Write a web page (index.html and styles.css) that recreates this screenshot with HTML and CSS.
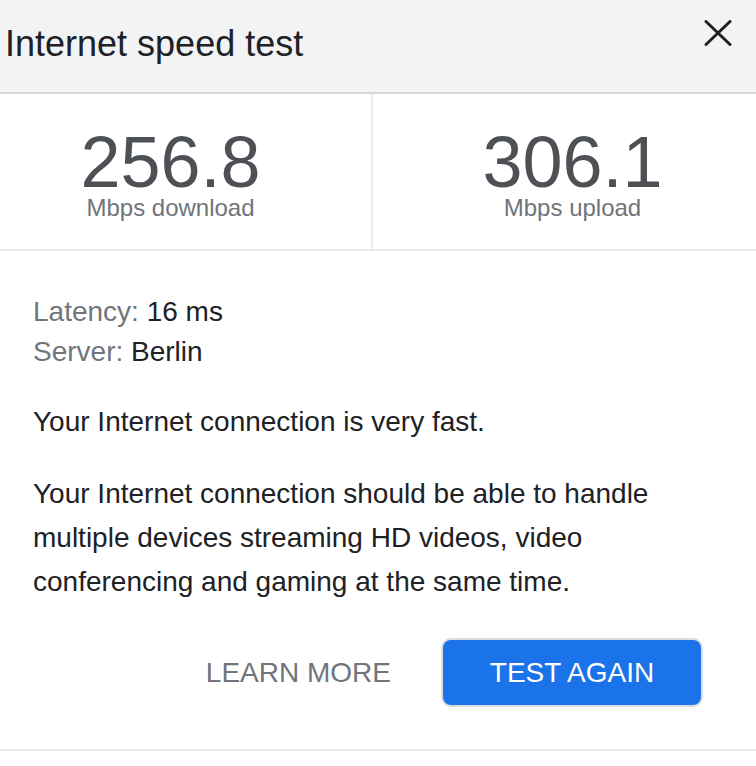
FILE: index.html
```html
<!DOCTYPE html>
<html lang="en">
<head>
<meta charset="utf-8">
<title>Internet speed test</title>
<link rel="stylesheet" href="styles.css">
</head>
<body>
<div class="panel">
  <header class="header">
    <h1 class="title">Internet speed test</h1>
    <button class="close" aria-label="Close">
      <svg width="28" height="26" viewBox="0 0 28 26" aria-hidden="true">
        <path d="M2 1.5 L26 24.5 M26 1.5 L2 24.5" stroke="#202124" stroke-width="3" fill="none" stroke-linecap="round"/>
      </svg>
    </button>
  </header>
  <section class="stats">
    <div class="stat stat-down">
      <div class="stat-value">256.8</div>
      <div class="stat-label">Mbps download</div>
    </div>
    <div class="stat stat-up">
      <div class="stat-value">306.1</div>
      <div class="stat-label">Mbps upload</div>
    </div>
  </section>
  <section class="details">
    <div class="meta">
      <div><span class="meta-key">Latency:</span> 16 ms</div>
      <div><span class="meta-key">Server:</span> Berlin</div>
    </div>
    <p class="verdict">Your Internet connection is very fast.</p>
    <p class="explain">Your Internet connection should be able to handle multiple devices streaming HD videos, video conferencing and gaming at the same time.</p>
    <div class="actions">
      <button class="btn-text">LEARN MORE</button>
      <button class="btn-primary">TEST AGAIN</button>
    </div>
  </section>
</div>
</body>
</html>
```
FILE: styles.css
```css
html, body {
  margin: 0;
  padding: 0;
  background: #ffffff;
}
body {
  font-family: "Liberation Sans", Arial, sans-serif;
  color: #202124;
}
.panel {
  width: 756px;
}
.header {
  display: flex;
  justify-content: space-between;
  align-items: flex-start;
  height: 92px;
  padding: 0 24px 0 5px;
  background: #f1f3f4;
  border-bottom: 2px solid #d6d8db;
}
.title {
  margin: 26px 0 0 0;
  font-size: 36px;
  line-height: 36px;
  font-weight: normal;
  color: #202124;
}
.close {
  margin-top: 20px;
  padding: 0;
  border: 0;
  background: none;
  width: 28px;
  height: 26px;
  display: block;
}
.close svg {
  display: block;
}
.stats {
  display: grid;
  grid-template-columns: 373px 1fr;
  border-bottom: 2px solid #ebebeb;
}
.stat {
  text-align: center;
  padding-top: 36px;
  padding-bottom: 27px;
}
.stat-down {
  padding-right: 30px;
  border-right: 2px solid #ebebeb;
}
.stat-up {
  padding-left: 16px;
}
.stat-value {
  font-size: 72px;
  line-height: 64px;
  color: #4d5156;
}
.stat-label {
  font-size: 24px;
  line-height: 28px;
  color: #70757a;
}
.details {
  padding: 41px 33px 42px 33px;
  border-bottom: 2px solid #ebebeb;
}
.meta {
  font-size: 28px;
  line-height: 40px;
  color: #202124;
}
.meta-key {
  color: #70757a;
}
.verdict {
  margin: 28px 0 0 0;
  font-size: 28px;
  line-height: 44px;
}
.explain {
  margin: 28px 0 0 0;
  font-size: 28px;
  line-height: 44px;
}
.actions {
  display: flex;
  justify-content: flex-end;
  align-items: center;
  gap: 50px;
  margin-top: 34px;
  padding-right: 20px;
}
.btn-text {
  font-family: "Liberation Sans", Arial, sans-serif;
  font-size: 28px;
  line-height: 32px;
  color: #70757a;
  background: none;
  border: 0;
  padding: 0;
}
.btn-primary {
  font-family: "Liberation Sans", Arial, sans-serif;
  font-size: 28px;
  line-height: 32px;
  color: #ffffff;
  background: #1a73e8;
  border: 2px solid #dadce0;
  border-radius: 10px;
  width: 262px;
  height: 69px;
  padding: 0;
}
```
